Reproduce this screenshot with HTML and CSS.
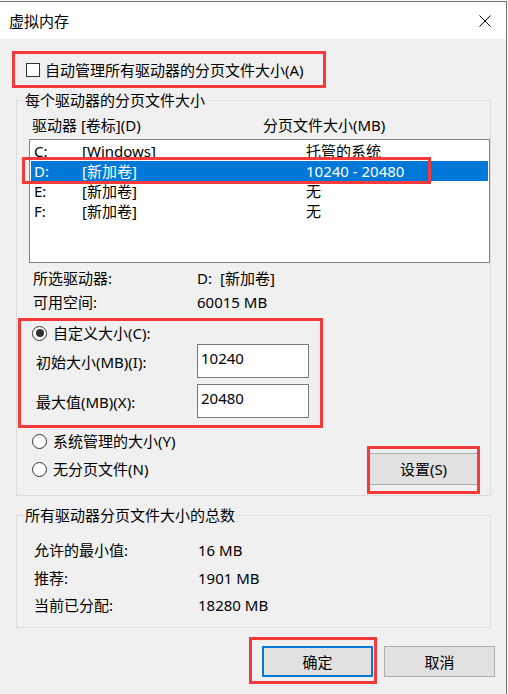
FILE: index.html
```html
<!DOCTYPE html>
<html lang="zh-CN">
<head>
<meta charset="utf-8">
<title>虚拟内存</title>
<link rel="stylesheet" href="styles.css">
</head>
<body>
<div class="window">
  <div class="titlebar">
    <span class="title">虚拟内存</span>
    <svg class="close" width="12" height="12" viewBox="0 0 12 12"><path d="M0.5 0.5 L11.5 11.5 M11.5 0.5 L0.5 11.5" stroke="#000" stroke-width="1" fill="none"/></svg>
  </div>
  <div class="content">
    <div class="auto-row"><span class="checkbox"></span><span>自动管理所有驱动器的分页文件大小(A)</span></div>

    <fieldset class="group group-drives">
      <legend>每个驱动器的分页文件大小</legend>
      <div class="list-head"><span class="col-drive">驱动器 [卷标](D)</span><span>分页文件大小(MB)</span></div>
      <div class="listbox">
        <div class="list-row"><span class="c1">C:</span><span class="c2">[Windows]</span><span>托管的系统</span></div>
        <div class="list-row selected"><span class="c1">D:</span><span class="c2">[新加卷]</span><span>10240 - 20480</span></div>
        <div class="list-row"><span class="c1">E:</span><span class="c2">[新加卷]</span><span>无</span></div>
        <div class="list-row"><span class="c1">F:</span><span class="c2">[新加卷]</span><span>无</span></div>
      </div>
      <div class="info-row info-first"><span class="info-label">所选驱动器:</span><span>D:<span class="vol">[新加卷]</span></span></div>
      <div class="info-row info-second"><span class="info-label">可用空间:</span><span>60015 MB</span></div>

      <div class="radio-row radio-custom"><span class="radio checked"></span><span>自定义大小(C):</span></div>
      <div class="size-row size-first"><span class="size-label">初始大小(MB)(I):</span><span class="textbox">10240</span></div>
      <div class="size-row size-second"><span class="size-label">最大值(MB)(X):</span><span class="textbox">20480</span></div>
      <div class="radio-row radio-system"><span class="radio"></span><span>系统管理的大小(Y)</span></div>
      <div class="radio-row radio-none"><span class="radio"></span><span>无分页文件(N)</span><button class="btn btn-set">设置(S)</button></div>
    </fieldset>

    <fieldset class="group group-total">
      <legend>所有驱动器分页文件大小的总数</legend>
      <div class="total-row total-1"><span class="info-label">允许的最小值:</span><span>16 MB</span></div>
      <div class="total-row total-2"><span class="info-label">推荐:</span><span>1901 MB</span></div>
      <div class="total-row total-3"><span class="info-label">当前已分配:</span><span>18280 MB</span></div>
    </fieldset>

    <div class="actions">
      <button class="btn btn-ok">确定</button>
      <button class="btn">取消</button>
    </div>
  </div>

  <div class="mark mark-auto"></div>
  <div class="mark mark-drive"></div>
  <div class="mark mark-custom"></div>
  <div class="mark mark-set"></div>
  <div class="mark mark-ok"></div>
</div>
</body>
</html>
```

FILE: styles.css
```css
html, body {
  margin: 0;
  padding: 0;
  background: #ffffff;
}
body {
  font-family: "Noto Sans", "Noto Sans CJK SC", sans-serif;
  font-size: 15px;
  line-height: 20px;
  color: #000;
}
.window {
  position: relative;
  width: 507px;
  height: 694px;
  margin-top: 1px;
  box-sizing: border-box;
  border-top: 1px solid #747474;
  border-right: 1px solid #747474;
  background: #f0f0f0;
}
.titlebar {
  height: 37px;
  background: #fff;
  display: flex;
  align-items: center;
  padding-left: 9px;
  padding-right: 15px;
}
.title { flex: 1; }
.close { display: block; }

.content {
  padding-left: 16px;
}
.auto-row {
  display: flex;
  align-items: center;
  height: 20px;
  padding-top: 21px;
  padding-left: 10px;
}
.checkbox {
  width: 14px;
  height: 14px;
  box-sizing: border-box;
  border: 1px solid #333;
  background: #fff;
  margin-right: 5px;
}

.group {
  margin: 0;
  padding: 0;
  border: 1px solid #dcdcdc;
  width: 475px;
  box-sizing: border-box;
  min-width: 0;
}
.group legend {
  padding: 0 2px;
  margin-left: 6px;
  line-height: 20px;
}
.group-drives { margin-top: 10px; padding-bottom: 10px; }
.group-total { margin-top: 9px; padding-top: 15px; padding-bottom: 12px; }

.list-head {
  display: flex;
  margin-top: 5px;
  padding-left: 15px;
  height: 20px;
}
.col-drive { width: 231px; }

.listbox {
  margin-top: 4px;
  margin-left: 12px;
  width: 461px;
  height: 124px;
  box-sizing: border-box;
  border: 1px solid #828282;
  background: #fff;
  padding: 1px;
}
.list-row {
  display: flex;
  height: 20px;
  padding-left: 3px;
}
.list-row.selected {
  background: #0078d7;
  color: #fff;
}
.c1 { width: 48px; }
.c2 { width: 224px; }

.info-row, .total-row {
  display: flex;
  height: 20px;
}
.info-row { padding-left: 16px; }
.total-row { padding-left: 17px; }
.info-label { width: 164px; flex: none; }
.info-first { margin-top: 5px; }
.info-second { margin-top: 4px; }
.vol { margin-left: 8px; }
.total-2 { margin-top: 8px; }
.total-3 { margin-top: 7px; }

.radio-row {
  display: flex;
  align-items: center;
  height: 20px;
  padding-left: 15px;
}
.radio {
  width: 15px;
  height: 15px;
  box-sizing: border-box;
  border: 1px solid #333;
  border-radius: 50%;
  background: #fff;
  margin-right: 6px;
  display: flex;
  align-items: center;
  justify-content: center;
}
.radio.checked::after {
  content: "";
  width: 8px;
  height: 8px;
  border-radius: 50%;
  background: #333;
}
.radio-custom { margin-top: 11px; }
.radio-system { margin-top: 13px; }
.radio-none { margin-top: 2px; height: 32px; }

.size-row {
  display: flex;
  align-items: center;
  padding-left: 19px;
}
.size-first { margin-top: 1px; }
.size-second { margin-top: 6px; }
.size-label { width: 161px; padding-top: 2px; }
.textbox {
  width: 112px;
  height: 34px;
  box-sizing: border-box;
  border: 1px solid #7a7a7a;
  background: #fff;
  padding: 3px 3px 0;
}

.btn {
  font: inherit;
  color: #000;
  width: 111px;
  height: 31px;
  box-sizing: border-box;
  border: 1px solid #adadad;
  background: #e1e1e1;
  padding: 0;
  margin: 0;
}
.btn-set {
  height: 32px;
  margin-left: auto;
  margin-right: 11px;
}
.btn-ok {
  border: 2px solid #0078d7;
}
.actions {
  display: flex;
  gap: 11px;
  margin-top: 18px;
  padding-left: 246px;
}

.mark {
  position: absolute;
  box-sizing: border-box;
  border: 3px solid #f43a3a;
}
.mark-auto { left: 12px; top: 49px; width: 314px; height: 37px; }
.mark-drive { left: 22px; top: 155px; width: 409px; height: 27px; }
.mark-custom { left: 18px; top: 316px; width: 305px; height: 110px; }
.mark-set { left: 367px; top: 444px; width: 113px; height: 48px; }
.mark-ok { left: 249px; top: 635px; width: 128px; height: 47px; }
```
